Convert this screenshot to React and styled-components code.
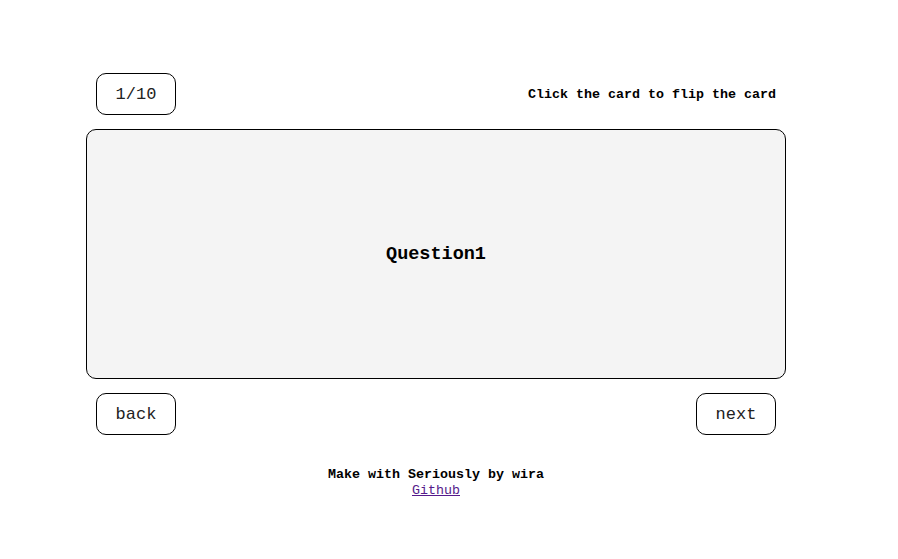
import React from "react";
import styled, { createGlobalStyle } from "styled-components";

const GlobalStyle = createGlobalStyle`
  body {
    margin: 0;
    background: #fff;
    font-family: "Liberation Mono", "Courier New", monospace;
  }
`;

export default function App() {
  return (
    <>
      <GlobalStyle />
      <Page>
        <Wrapper>
          <TopBar>
            <NavButton>1/10</NavButton>
            <Hint>Click the card to flip the card</Hint>
          </TopBar>
          <Card>
            <CardText>Question1</CardText>
          </Card>
          <BottomBar>
            <NavButton>back</NavButton>
            <NavButton>next</NavButton>
          </BottomBar>
          <Footer>
            <FooterText>Make with Seriously by wira</FooterText>
            <FooterLink href="#">Github</FooterLink>
          </Footer>
        </Wrapper>
      </Page>
    </>
  );
}

const Page = styled.div`
  padding: 73px 0 0 86px;
`;

const Wrapper = styled.div`
  width: 700px;
`;

const TopBar = styled.div`
  display: flex;
  justify-content: space-between;
  align-items: center;
  padding: 0 10px;
`;

const NavButton = styled.button`
  width: 80px;
  height: 42px;
  border: 1px solid #000;
  border-radius: 10px;
  background: #fff;
  color: #222;
  font-family: "Liberation Mono", "Courier New", monospace;
  font-size: 17px;
  padding: 0;
  cursor: pointer;
`;

const Hint = styled.span`
  font-size: 13.33px;
  font-weight: bold;
  color: #000;
`;

const Card = styled.div`
  margin-top: 14px;
  height: 248px;
  border: 1px solid #000;
  border-radius: 10px;
  background: #f4f4f4;
  display: flex;
  align-items: center;
  justify-content: center;
`;

const CardText = styled.h2`
  margin: 0;
  font-size: 18.5px;
  font-weight: bold;
  color: #000;
`;

const BottomBar = styled.div`
  display: flex;
  justify-content: space-between;
  margin-top: 14px;
  padding: 0 10px;
`;

const Footer = styled.div`
  display: flex;
  flex-direction: column;
  align-items: center;
  margin-top: 32px;
  font-size: 13.33px;
  line-height: 16px;
`;

const FooterText = styled.span`
  font-weight: bold;
  color: #000;
`;

const FooterLink = styled.a`
  color: #551a8b;
  text-decoration: underline;
`;
